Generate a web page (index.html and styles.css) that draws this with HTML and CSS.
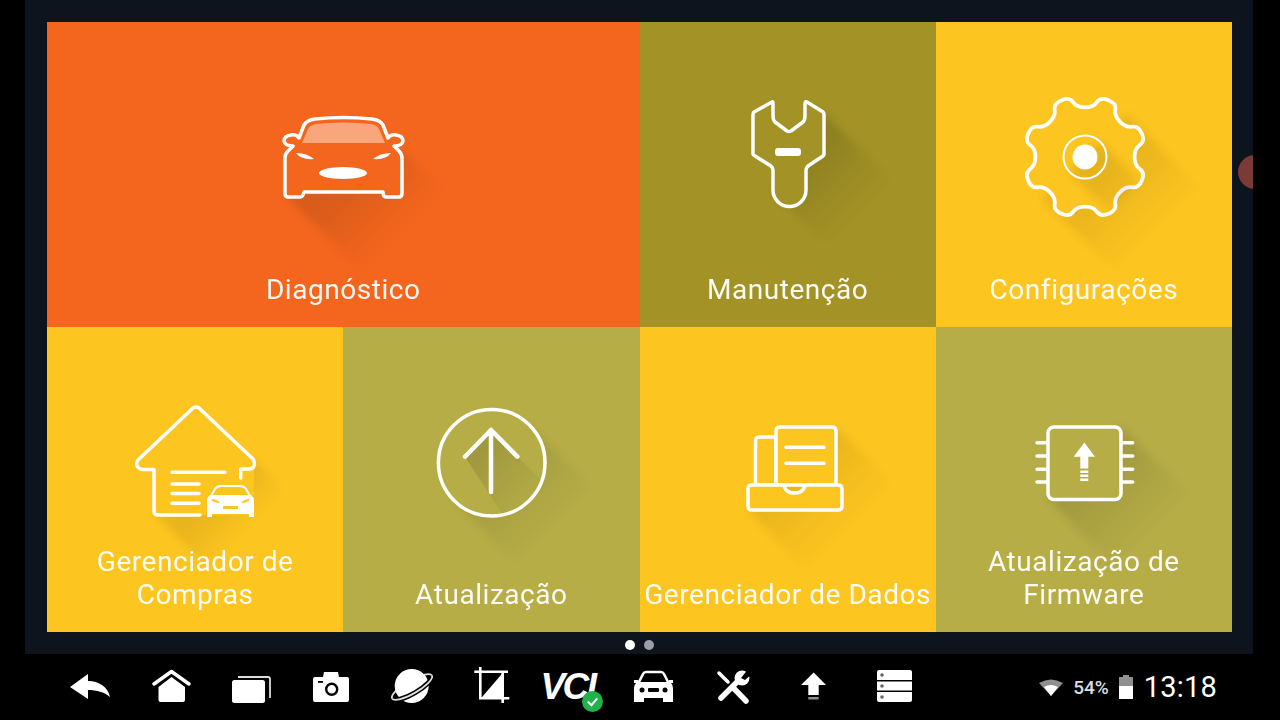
FILE: index.html
```html
<!DOCTYPE html>
<html lang="pt">
<head>
  <meta charset="UTF-8" />
  <title>Menu principal</title>
  <link rel="stylesheet" href="styles.css">
</head>
<body>
  <div class="panel">
    <span class="red-dot"></span>
    <div class="tiles">

      <div class="tile tile-wide orange">
        <svg class="tile-icon" viewBox="0 0 160 160">
          <defs><linearGradient id="sh-car" gradientUnits="userSpaceOnUse" x1="95" y1="95" x2="148" y2="148"><stop offset="0" stop-color="#000" stop-opacity=".1"/><stop offset="1" stop-color="#000" stop-opacity="0"/></linearGradient></defs>
          <polygon class="shadow" points="139,72 219,152 102,197 22,117" fill="url(#sh-car)"/>
          <path class="line solid" d="M52 41 Q80 38 109 41 Q117 42 120 47 L125 60 Q128 56 133 57 Q140 58 140 63 Q139 68 131 68 L136 73 Q139 76 139 80 V115 Q139 119 136 119 H123 Q120 119 120 114 H41 Q40 119 37 119 H25 Q22 119 22 115 V80 Q22 76 25 73 L30 68 Q22 68 21 63 Q21 58 28 57 Q33 56 36 60 L41 47 Q44 42 52 41Z"/>
          <path class="glass" d="M53 46 Q80 43 108 46 Q114 47 116 51 L122 65 H39 L45 51 Q47 47 53 46Z"/>
          <path class="white" d="M33 75 Q44 75 51 81 Q38 82 33 75Z M128 75 Q117 75 110 81 Q123 82 128 75Z"/>
          <ellipse class="white" cx="80" cy="95" rx="24" ry="6"/>
        </svg>
        <div class="tile-label">Diagnóstico</div>
      </div>

      <div class="tile dark-olive">
        <svg class="tile-icon" viewBox="0 0 160 160">
          <defs><linearGradient id="sh-key" gradientUnits="userSpaceOnUse" x1="85" y1="85" x2="145" y2="145"><stop offset="0" stop-color="#000" stop-opacity=".13"/><stop offset="1" stop-color="#000" stop-opacity="0"/></linearGradient></defs>
          <polygon class="shadow" points="116,35 200,119 150,195 66,115" fill="url(#sh-key)"/>
          <path class="line solid" d="M64 24 L46 34 Q45 35 45 37 V76 Q45 77 47 78 L63 88 Q65 90 65 92 V112 A16.5 16.5 0 0 0 98 112 V92 Q98 90 100 88 L115 78 Q116 77 116 76 V37 Q116 35 115 34 L99 24 Q97 23 97 26 V37 Q97 42 95 44 L83 53 Q81 54 79 53 L67 44 Q65 42 65 37 V26 Q65 23 64 24Z"/>
          <rect class="white" x="67" y="70" width="26" height="8" rx="3"/>
        </svg>
        <div class="tile-label">Manutenção</div>
      </div>

      <div class="tile yellow">
        <svg class="tile-icon" viewBox="0 0 160 160">
          <defs><linearGradient id="sh-gear" gradientUnits="userSpaceOnUse" x1="15" y1="15" x2="75" y2="75"><stop offset="0" stop-color="#000" stop-opacity=".09"/><stop offset="1" stop-color="#000" stop-opacity="0"/></linearGradient></defs>
          <g transform="translate(81 79)">
            <polygon class="shadow" points="42,-42 127,43 43,127 -42,42" fill="url(#sh-gear)"/>
            <path class="line solid gear" d="M0 -46.3 Q7.8 -46.3 11.15 -51.25 Q14.5 -56.2 21.95 -53.1 Q29.4 -50 28.35 -44.15 Q27.3 -38.3 32.8 -32.8 Q38.3 -27.3 44.15 -28.35 Q50 -29.4 53.1 -21.95 Q56.2 -14.5 51.25 -11.15 Q46.3 -7.8 46.3 0 Q46.3 7.8 51.25 11.15 Q56.2 14.5 53.1 21.95 Q50 29.4 44.15 28.35 Q38.3 27.3 32.8 32.8 Q27.3 38.3 28.35 44.15 Q29.4 50 21.95 53.1 Q14.5 56.2 11.15 51.25 Q7.8 46.3 0 46.3 Q-7.8 46.3 -11.15 51.25 Q-14.5 56.2 -21.95 53.1 Q-29.4 50 -28.35 44.15 Q-27.3 38.3 -32.8 32.8 Q-38.3 27.3 -44.15 28.35 Q-50 29.4 -53.1 21.95 Q-56.2 14.5 -51.25 11.15 Q-46.3 7.8 -46.3 0 Q-46.3 -7.8 -51.25 -11.15 Q-56.2 -14.5 -53.1 -21.95 Q-50 -29.4 -44.15 -28.35 Q-38.3 -27.3 -32.8 -32.8 Q-27.3 -38.3 -28.35 -44.15 Q-29.4 -50 -21.95 -53.1 Q-14.5 -56.2 -11.15 -51.25 Q-7.8 -46.3 0 -46.3Z"/>
            <polygon class="shadow" points="15,-15 55,25 25,55 -15,15" fill="url(#sh-gear)"/>
            <circle class="thin" r="21.5"/>
            <circle class="white" r="12.5"/>
          </g>
        </svg>
        <div class="tile-label">Configurações</div>
      </div>

      <div class="tile yellow">
        <svg class="tile-icon" viewBox="0 0 160 160">
          <defs><linearGradient id="sh-house" gradientUnits="userSpaceOnUse" x1="109" y1="109" x2="140" y2="140"><stop offset="0" stop-color="#000" stop-opacity=".08"/><stop offset="1" stop-color="#000" stop-opacity="0"/></linearGradient></defs>
          <polygon class="shadow" points="138,76 200,138 100,192 39,130" fill="url(#sh-house)"/>
          <path class="solid" d="M81 24 L22 78 V86 H39 V132 H139 V86 H140 V78Z"/>
          <path class="line" d="M85 132 H43 Q39 132 39 128 V86.5 H27 Q19 84 23 77 L78 25 Q81 23 84 25 L138 76 Q142 84 135 86 H125.7 V95"/>
          <path class="line" d="M57 89.3 H110 M57 101 H84 M57 110.5 H84 M57 120.3 H84"/>
          <path class="thin" d="M96 113 L100 106 Q102 103 106 103 H125 Q129 103 131 106 L135 113"/>
          <path class="white" d="M95 112 H136 Q139 114 139 118 V134 H134 V131 H97 V134 H92 V118 Q92 114 95 112Z"/>
          <path class="cut" d="M96 116 Q102 116 105 120 Q98 120 96 116Z M135 116 Q129 116 126 120 Q133 120 135 116Z M108 123 H123 V126 H108Z"/>
        </svg>
        <div class="tile-label">Gerenciador de<br>Compras</div>
      </div>

      <div class="tile olive">
        <svg class="tile-icon" viewBox="0 0 160 160">
          <defs>
            <linearGradient id="sh-up" gradientUnits="userSpaceOnUse" x1="70" y1="70" x2="128" y2="128"><stop offset="0" stop-color="#000" stop-opacity=".12"/><stop offset="1" stop-color="#000" stop-opacity="0"/></linearGradient>
            <linearGradient id="sh-ring" gradientUnits="userSpaceOnUse" x1="105" y1="105" x2="145" y2="145"><stop offset="0" stop-color="#000" stop-opacity=".07"/><stop offset="1" stop-color="#000" stop-opacity="0"/></linearGradient>
            <clipPath id="ring-clip"><circle cx="80.7" cy="79.7" r="53"/></clipPath>
          </defs>
          <polygon class="shadow" points="118,42 190,114 114,190 43,117" fill="url(#sh-ring)"/>
          <circle class="line solid" cx="80.7" cy="79.7" r="53.3"/>
          <polygon points="54,74 80,46 107,74 170,137 117,170" fill="url(#sh-up)" clip-path="url(#ring-clip)"/>
          <path class="line heavy" d="M54 73.7 L80 47 L106.3 73.7 M80 47 V109"/>
        </svg>
        <div class="tile-label">Atualização</div>
      </div>

      <div class="tile yellow">
        <svg class="tile-icon" viewBox="0 0 160 160">
          <defs><linearGradient id="sh-docs" gradientUnits="userSpaceOnUse" x1="95" y1="95" x2="145" y2="145"><stop offset="0" stop-color="#000" stop-opacity=".07"/><stop offset="1" stop-color="#000" stop-opacity="0"/></linearGradient></defs>
          <polygon class="shadow" points="128,44 200,116 112,204 40,127" fill="url(#sh-docs)"/>
          <path class="line solid" d="M68 102 V54 H52 Q47.5 54 47.5 58 V102 Z"/>
          <path class="line solid" d="M68 102 V48 Q68 44 72 44 H124 Q128 44 128 48 V102 Z"/>
          <path class="line solid" d="M44 102 H74 Q76 102 77 105 Q79 110 86 110 Q94 110 96 105 Q97 102 99 102 H130 Q134 102 134 106 V123 Q134 127 130 127 H44 Q40 127 40 123 V106 Q40 102 44 102Z"/>
          <path class="line" d="M78 64.3 H116 M78 80.3 H116"/>
        </svg>
        <div class="tile-label">Gerenciador de Dados</div>
      </div>

      <div class="tile olive">
        <svg class="tile-icon" viewBox="0 0 160 160">
          <defs><linearGradient id="sh-chip" gradientUnits="userSpaceOnUse" x1="90" y1="90" x2="150" y2="150"><stop offset="0" stop-color="#000" stop-opacity=".11"/><stop offset="1" stop-color="#000" stop-opacity="0"/></linearGradient></defs>
          <polygon class="shadow" points="117,44 200,127 127,200 44,116" fill="url(#sh-chip)"/>
          <path class="line" d="M33 59.7 H44 M33 73 H44 M33 86.3 H44 M33 99 H44 M117 59.7 H128.7 M117 73 H128.7 M117 86.3 H128.7 M117 99 H128.7"/>
          <rect class="line solid" x="44" y="44" width="73" height="72.5" rx="6"/>
          <path class="white" d="M80.3 59.5 L91 73.7 H84.3 V85.5 H76.3 V73.7 H69.7Z M76.3 87.5 H84.3 V90 H76.3Z M76.3 91.5 H84.3 V94 H76.3Z M76.3 95.5 H84.3 V98 H76.3Z"/>
        </svg>
        <div class="tile-label">Atualização de<br>Firmware</div>
      </div>

    </div>
    <div class="pager">
      <span class="pager-dot active"></span>
      <span class="pager-dot"></span>
    </div>
  </div>

  <div class="navbar">
    <div class="nav-icons">
      <div class="nav-btn">
        <svg class="nav-icon" viewBox="0 0 40 36"><path class="white" d="M0 18 L18 5 V12 C29 12 38 18 40 28 C34 23 27 21 18 21 V30Z"/></svg>
      </div>
      <div class="nav-btn">
        <svg class="nav-icon" viewBox="0 0 40 36">
          <path class="white" d="M7.5 18 L20.5 8 L34 18 V31 Q34 33 32 33 H9.5 Q7.5 33 7.5 31Z"/>
          <path class="nav-line" d="M3 15 L20.5 2.5 L38 15"/>
        </svg>
      </div>
      <div class="nav-btn">
        <svg class="nav-icon" viewBox="0 0 40 36">
          <path class="nav-thin" d="M7 8 H37 Q39 8 39 10 V29"/>
          <rect class="white" x="1" y="11" width="33" height="23" rx="2.5"/>
        </svg>
      </div>
      <div class="nav-btn">
        <svg class="nav-icon" viewBox="0 0 40 36">
          <path class="white" d="M4 8 H12 L13 3 H27 L28 8 H36 Q38 8 38 10 V31 Q38 33 36 33 H4 Q2 33 2 31 V10 Q2 8 4 8Z"/>
          <circle class="cut-ring" cx="20.7" cy="20.3" r="5.5"/>
          <rect class="black" x="7" y="12" width="5" height="1.8"/>
        </svg>
      </div>
      <div class="nav-btn">
        <svg class="nav-icon" viewBox="0 0 40 36">
          <ellipse class="nav-thin" cx="20" cy="18" rx="23" ry="6.5" transform="rotate(-30 20 18)"/>
          <circle class="white" cx="19.7" cy="17" r="17"/>
          <g transform="rotate(-30 20 18)">
            <path class="ring-gap" d="M-3 18 A23 6.5 0 0 0 43 18"/>
            <path class="nav-thin" d="M-3 18 A23 6.5 0 0 0 43 18"/>
          </g>
        </svg>
      </div>
      <div class="nav-btn">
        <svg class="nav-icon" viewBox="0 0 40 36">
          <path class="nav-thin bold" d="M2.3 2.7 H36 M8.3 -2 V29.3 H37.3 M30.7 2.7 V34"/>
          <polygon class="white" points="30.7,4 30.7,29.3 9,29.3"/>
        </svg>
      </div>
      <div class="nav-btn">
        <span class="vci">VCI</span>
        <svg class="vci-badge" viewBox="0 0 20 20">
          <circle cx="10" cy="10" r="10" fill="#22b24c"/>
          <path d="M5.5 10 L9 13.5 L14.5 7" fill="none" stroke="#fff" stroke-width="2"/>
        </svg>
      </div>
      <div class="nav-btn">
        <svg class="nav-icon" viewBox="0 0 40 36">
          <path class="nav-thin bold" d="M6 13 L10 5 Q11 3 13 3 H28 Q30 3 31 5 L35 13"/>
          <path class="white" d="M1 11 H5 L6 13 H35 L36 11 H40 V14 H38 Q40 16 40 19 V33 H30 V29 H11 V33 H1 V19 Q1 16 3 14 H1Z"/>
          <circle class="black" cx="9" cy="21" r="2.5"/>
          <circle class="black" cx="32" cy="21" r="2.5"/>
          <rect class="black" x="15" y="19" width="11" height="4" rx="1"/>
        </svg>
      </div>
      <div class="nav-btn">
        <svg class="nav-icon" viewBox="0 0 40 36">
          <path class="nav-line" d="M6 4 L15 13"/>
          <path class="nav-line wide" d="M20 18.5 L33 32"/>
          <path class="nav-line wide" d="M8 29 L27 10"/>
          <circle class="white" cx="29" cy="9" r="7.5"/>
          <polygon class="black" points="28,9 36,-1 40,4 32,11"/>
        </svg>
      </div>
      <div class="nav-btn">
        <svg class="nav-icon" viewBox="0 0 40 36">
          <path class="white" d="M19.7 3.5 L32 16 H24.7 V26 H14.3 V16 H7Z"/>
          <rect class="dim" x="14.3" y="28" width="10.4" height="2.5"/>
        </svg>
      </div>
      <div class="nav-btn">
        <svg class="nav-icon" viewBox="0 0 40 36">
          <path class="white" d="M5 1 H36 Q38 1 38 3 V11 H3 V3 Q3 1 5 1Z"/>
          <rect class="white" x="3" y="12.5" width="35" height="9"/>
          <path class="white" d="M3 23 H38 V31 Q38 33 36 33 H5 Q3 33 3 31Z"/>
          <circle class="grey" cx="8" cy="6" r="1.8"/>
          <circle class="grey" cx="8" cy="17" r="1.8"/>
          <circle class="grey" cx="8" cy="28" r="1.8"/>
        </svg>
      </div>
    </div>

    <div class="status">
      <svg class="status-wifi" viewBox="0 0 24 17">
        <path class="dim" d="M0 4 Q12 -3 24 4 L12 17Z"/>
        <path class="white" d="M5 8 Q12 4 19 8 L12 17Z"/>
      </svg>
      <span class="status-pct">54%</span>
      <svg class="status-batt" viewBox="0 0 14 24">
        <path class="dim" d="M4 0 H10 V2 H14 V11 H0 V2 H4Z"/>
        <rect class="white" x="0" y="11" width="14" height="13"/>
      </svg>
      <span class="status-time">13:18</span>
    </div>
  </div>
</body>
</html>
```

FILE: styles.css
```css
body {
  margin: 0;
  width: 1280px;
  height: 720px;
  overflow: hidden;
  background: #000;
  font-family: Roboto, 'Liberation Sans', sans-serif;
}

.panel {
  position: relative;
  overflow: hidden;
  box-sizing: border-box;
  width: 1228px;
  height: 654px;
  margin-left: 25px;
  padding: 22px 21px 0 22px;
  background: #0d141e;
}
.red-dot {
  position: absolute;
  left: 1213px;
  top: 155px;
  width: 34px;
  height: 34px;
  border-radius: 50%;
  background: #7a3a35;
}

.tiles {
  display: grid;
  grid-template-columns: repeat(4, 1fr);
  grid-template-rows: 305px 305px;
}
.tile {
  display: flex;
  flex-direction: column;
  align-items: center;
  overflow: hidden;
  background: var(--tile);
  padding-top: 56px;
  box-sizing: border-box;
}
.tile-wide { grid-column: span 2; }
.orange { --tile: #f4661e; }
.dark-olive { --tile: #a39326; }
.yellow { --tile: #fdc520; }
.olive { --tile: #b6ad47; }

.tile-icon {
  flex: none;
  width: 160px;
  height: 160px;
  overflow: visible;
  filter: blur(.4px);
}
.tile-label {
  margin-top: auto;
  padding-bottom: 21px;
  color: #fff;
  opacity: .95;
  font-size: 28px;
  line-height: 33px;
  letter-spacing: .55px;
  text-align: center;
  white-space: nowrap;
}

.shadow { filter: blur(4px); }
.line {
  fill: none;
  stroke: #fff;
  stroke-width: 3.5px;
  stroke-linejoin: round;
  stroke-linecap: round;
}
.solid { fill: var(--tile); }
.heavy { stroke-width: 4.5px; }
.gear { transform: scale(1.07); }
.thin {
  fill: none;
  stroke: #fff;
  stroke-width: 2px;
}
.white { fill: #fff; }
.glass { fill: rgba(255,255,255,.42); }
.cut { fill: var(--tile); }

.pager {
  display: flex;
  justify-content: center;
  align-items: center;
  gap: 9px;
  height: 22px;
  padding-top: 4px;
  box-sizing: border-box;
  margin-left: -1px;
}
.pager-dot {
  width: 10px;
  height: 10px;
  border-radius: 50%;
  background: #9a9ea8;
}
.pager-dot.active { background: #fff; }

.navbar {
  display: flex;
  align-items: center;
  height: 66px;
  padding: 0 63px 0 50px;
}
.nav-icons { display: flex; }
.nav-btn {
  position: relative;
  display: flex;
  justify-content: center;
  align-items: center;
  width: 80.4px;
  height: 36px;
}
.nav-icon {
  width: 40px;
  height: 36px;
  overflow: visible;
}
.nav-line {
  fill: none;
  stroke: #fff;
  stroke-width: 3.5px;
  stroke-linecap: round;
  stroke-linejoin: round;
}
.nav-line.wide { stroke-width: 5.5px; }
.nav-thin {
  fill: none;
  stroke: #ddd;
  stroke-width: 1.8px;
}
.nav-thin.bold { stroke: #fff; stroke-width: 2.6px; }
.ring-gap {
  fill: none;
  stroke: #000;
  stroke-width: 5px;
}
.cut-ring {
  fill: #fff;
  stroke: #000;
  stroke-width: 2.4px;
}
.black { fill: #000; }
.grey { fill: #666; }
.dim { fill: #8f8f8f; }

.vci {
  color: #fff;
  font-family: 'Liberation Sans', sans-serif;
  font-size: 37px;
  font-weight: bold;
  font-style: italic;
  letter-spacing: -2.5px;
  line-height: 36px;
  margin-right: 10px;
}
.vci-badge {
  position: absolute;
  left: 50px;
  top: 22px;
  width: 21px;
  height: 21px;
}

.status {
  display: flex;
  align-items: center;
  margin-left: auto;
}
.status-wifi {
  width: 24px;
  height: 17px;
}
.status-pct {
  margin-left: 10px;
  color: #ddd;
  font-size: 19px;
  font-weight: 500;
}
.status-batt {
  width: 14px;
  height: 24px;
  margin-left: 10px;
}
.status-time {
  margin-left: 11px;
  color: #fff;
  font-size: 29px;
  letter-spacing: .2px;
}
```
